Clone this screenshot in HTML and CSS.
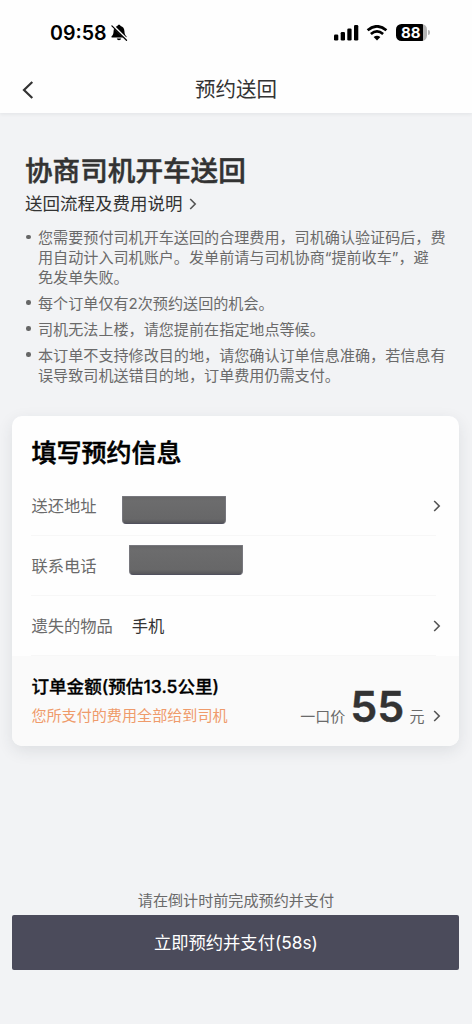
FILE: index.html
```
<!DOCTYPE html>
<html lang="zh-CN">
<head>
<meta charset="utf-8">
<meta name="viewport" content="width=device-width, initial-scale=1">
<title>预约送回</title>
<link rel="stylesheet" href="styles.css">
</head>
<body>
<div class="screen">
  <header class="top">
    <div class="status">
      <div class="clock">
        <span class="time">09:58</span>
        <svg class="bell" width="18" height="18" viewBox="0 0 18 18">
          <path d="M9 .8c.9 0 1.500.6 1.600 1.300 2.500.7 3.700 2.400 3.800 4.800.1 3.200.9 4.200 2 5.300.4.5.2 1.300-.6 1.300H2.200c-.8 0-1-.8-.6-1.300 1.100-1.100 1.900-2.100 2-5.300.1-2.400 1.300-4.100 3.800-4.800C7.500 1.400 8.100.8 9 .8z"/>
          <path d="M6.800 14.600h4.400c-.3 1.100-1.100 1.700-2.200 1.700s-1.900-.6-2.200-1.700z"/>
          <path d="M2.800 1.600l14.400 14.200" stroke="#fff" stroke-width="2.400"/>
          <path d="M1.900 1.900l14.600 14.400" stroke="#000" stroke-width="1.300" stroke-linecap="round"/>
        </svg>
      </div>
      <div class="signals">
        <svg width="25" height="16" viewBox="0 0 25 16">
          <rect x="0" y="9.500" width="4.300" height="6" rx="1.300"/>
          <rect x="6.700" y="7" width="4.300" height="8.500" rx="1.300"/>
          <rect x="13.300" y="3.500" width="4.300" height="12" rx="1.300"/>
          <rect x="20" y="0" width="4.300" height="15.500" rx="1.300"/>
        </svg>
        <svg class="wifi" width="22" height="16" viewBox="0 0 22 16">
          <path d="M1.600 5.300Q11-2.700 20.400 5.300" fill="none" stroke="#000" stroke-width="2.700"/>
          <path d="M4.900 9Q11 3.800 17.100 9" fill="none" stroke="#000" stroke-width="2.700"/>
          <path d="M11 15.600l-3.400-3.500q3.400-2.700 6.800 0z"/>
        </svg>
        <div class="battery"><span class="level">88</span></div>
        <span class="cap"></span>
      </div>
    </div>
    <nav class="nav">
      <svg class="back" width="12" height="18" viewBox="0 0 12 18"><path d="M10.300 1L2 9l8.300 8"/></svg>
      <h1 class="nav-title">预约送回</h1>
    </nav>
  </header>

  <section class="intro">
    <h2 class="headline">协商司机开车送回</h2>
    <a class="guide">送回流程及费用说明<svg class="chev" width="8" height="12" viewBox="0 0 8 12"><path d="M1.200 1l5 5-5 5"/></svg></a>
    <ul class="rules">
      <li>您需要预付司机开车送回的合理费用，司机确认验证码后，费<br>用自动计入司机账户。发单前请与司机协商“提前收车”，避<br>免发单失败。</li>
      <li>每个订单仅有2次预约送回的机会。</li>
      <li>司机无法上楼，请您提前在指定地点等候。</li>
      <li>本订单不支持修改目的地，请您确认订单信息准确，若信息有<br>误导致司机送错目的地，订单费用仍需支付。</li>
    </ul>
  </section>

  <main class="card">
    <h2 class="card-title">填写预约信息</h2>
    <div class="row">
      <span class="label">送还地址</span><span class="mask address"></span>
      <svg class="chev" width="8" height="12" viewBox="0 0 8 12"><path d="M1.200 1l5 5-5 5"/></svg>
    </div>
    <div class="row">
      <span class="label">联系电话</span><span class="mask phone"></span>
    </div>
    <div class="row">
      <span class="label">遗失的物品</span><span class="value">手机</span>
      <svg class="chev" width="8" height="12" viewBox="0 0 8 12"><path d="M1.200 1l5 5-5 5"/></svg>
    </div>
    <div class="amount">
      <div class="amount-info">
        <strong>订单金额(预估13.5公里)</strong>
        <span class="note">您所支付的费用全部给到司机</span>
      </div>
      <div class="price">
        <span>一口价</span><b>55</b><span>元</span>
        <svg class="chev" width="8" height="12" viewBox="0 0 8 12"><path d="M1.200 1l5 5-5 5"/></svg>
      </div>
    </div>
  </main>

  <footer class="bottom">
    <p class="hint">请在倒计时前完成预约并支付</p>
    <button class="pay">立即预约并支付(58s)</button>
  </footer>
</div>
</body>
</html>
```
FILE: styles.css
```
* { box-sizing: border-box; margin: 0; padding: 0; }
body {
  font-family: Inter, "Noto Sans CJK SC", sans-serif;
  background: #f2f3f5;
  color: #333;
}
.screen {
  width: 472px;
  height: 1024px;
  display: flex;
  flex-direction: column;
  overflow: hidden;
  white-space: nowrap;
}
.top {
  height: 113px;
  background: #fefefe;
  box-shadow: 0 1px 4px rgba(30, 35, 45, .08);
  flex: none;
}
.status {
  height: 65px;
  padding: 0 42px 0 50px;
  display: flex;
  align-items: center;
  justify-content: space-between;
}
.clock, .signals { display: flex; align-items: center; }
.time { font-size: 19.6px; line-height: 24px; font-weight: 600; color: #000; width: 60px; }
.wifi { margin: 0 8px 0 7px; }
.battery {
  width: 31px;
  height: 17px;
  border-radius: 5.5px;
  background: linear-gradient(90deg, #000 27px, #b5b5b5 27px);
  color: #fff;
}
.level { display: block; padding-left: 5px; font-size: 15px; line-height: 17px; font-weight: 700; letter-spacing: -.1px; }
.cap { width: 2px; height: 5px; margin-left: 1px; border-radius: 0 2px 2px 0; background: #b5b5b5; }
.nav {
  height: 48px;
  padding: 2px 22px 0;
  display: grid;
  grid-template-columns: 12px 1fr 12px;
  align-items: center;
}
.back path { fill: none; stroke: #333; stroke-width: 2.2; }
.nav-title { font-size: 20.5px; line-height: 30px; font-weight: 400; text-align: center; }
.chev { flex: none; }
.chev path { fill: none; stroke: #555; stroke-width: 1.6; }

.intro { padding: 39px 25px 0; height: 303px; flex: none; }
.headline { font-size: 27.6px; line-height: 38px; font-weight: 500; -webkit-text-stroke: .5px #333; }
.guide { display: flex; align-items: center; gap: 6px; font-size: 17.5px; line-height: 28px; }
.rules {
  list-style: none;
  margin-top: 10px;
  display: flex;
  flex-direction: column;
  gap: 6.3px;
  font-size: 15.1px;
  line-height: 19.8px;
  color: #6a6a6a;
}
.rules li { position: relative; padding-left: 13px; }
.rules li::before {
  content: "";
  position: absolute;
  left: 1px;
  top: 6.5px;
  width: 4.5px;
  height: 4.5px;
  border-radius: 50%;
  background: #666;
}

.card {
  margin: 0 12.6px 0 12.4px;
  height: 329.5px;
  flex: none;
  background: #fefefe;
  border-radius: 10px;
  box-shadow: 0 5px 16px rgba(40, 45, 60, .1);
  display: flex;
  flex-direction: column;
  overflow: hidden;
}
.card-title {
  padding: 18px 19px 0;
  height: 60px;
  font-size: 25px;
  line-height: 38px;
  font-weight: 500;
  color: #000;
  -webkit-text-stroke: .5px #000;
}
.row {
  margin: 0 23px 0 19px;
  height: 60px;
  display: flex;
  align-items: center;
  font-size: 16.3px;
  border-bottom: 1px solid #f7f7f7;
}
.row .chev { margin-left: auto; margin-right: -5px; }
.label { color: #6a6a6a; margin-bottom: 1px; }
.value { margin: 0 0 1px 19px; }
.mask {
  background: linear-gradient(#666668, #6c6c6d 4px, #676768 85%, #57575b);
  border: 1px solid #77777d;
  border-bottom: 1px solid #50505d;
  border-radius: 1px 1px 4px 4px;
}
.address { width: 104px; height: 28px; margin: 8px 0 0 25px; }
.phone { width: 114px; height: 30px; margin: 0 0 11px 32px; }
.amount {
  flex: 1;
  padding: 17px 18px 0 19px;
  background: #fafafa;
  display: flex;
  justify-content: space-between;
}
.amount-info { display: flex; flex-direction: column; gap: 3px; }
.amount-info strong {
  font-size: 17.6px;
  line-height: 28px;
  font-weight: 500;
  color: #000;
  -webkit-text-stroke: .3px #000;
}
.note { font-size: 15.1px; line-height: 24px; color: #ef9b6b; }
.price { display: flex; align-items: baseline; margin-top: 2.5px; font-size: 15px; color: #6a6a6a; height: 60px; }
.price b { margin: 0 5px; font-size: 43px; line-height: 60px; font-weight: 600; color: #333; -webkit-text-stroke: .4px #333; }
.price .chev { margin-left: 9px; }

.bottom { margin-top: auto; padding: 0 12.6px 54px 12.4px; text-align: center; }
.hint { font-size: 15.1px; line-height: 22px; color: #6a6a6a; margin-bottom: 3px; }
.pay {
  display: block;
  width: 100%;
  height: 55px;
  border: 0;
  border-radius: 2px;
  background: #4b4b5b;
  color: #fff;
  font: 400 17.3px/26px Inter, "Noto Sans CJK SC", sans-serif;
}
```
